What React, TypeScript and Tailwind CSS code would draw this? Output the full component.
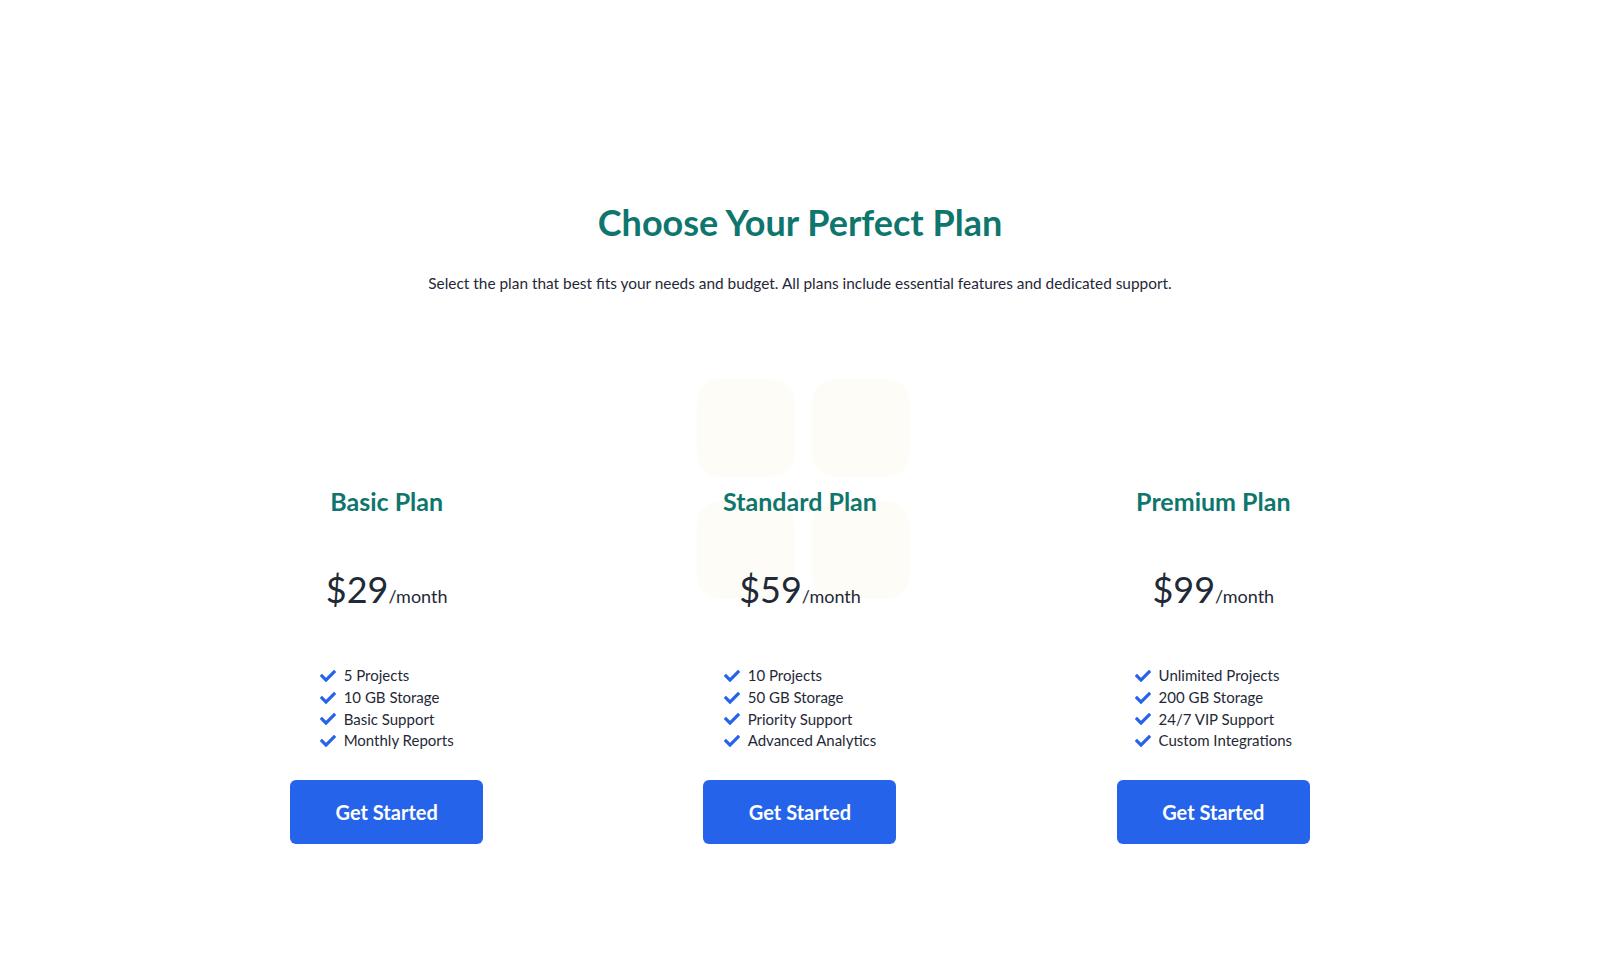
import { FaCheck } from 'react-icons/fa'

type Plan = {
  name: string
  price: string
  features: string[]
}

const plans: Plan[] = [
  { name: 'Basic Plan', price: '$29', features: ['5 Projects', '10 GB Storage', 'Basic Support', 'Monthly Reports'] },
  { name: 'Standard Plan', price: '$59', features: ['10 Projects', '50 GB Storage', 'Priority Support', 'Advanced Analytics'] },
  { name: 'Premium Plan', price: '$99', features: ['Unlimited Projects', '200 GB Storage', '24/7 VIP Support', 'Custom Integrations'] },
]

function PlanCard({ plan, decorated }: { plan: Plan; decorated?: boolean }) {
  return (
    <div className="relative flex flex-col items-center pt-[190px]">
      {/* Faint decorative tiles behind the middle plan */}
      {decorated && (
        <div className="pointer-events-none absolute left-1/2 top-[84px] grid -translate-x-1/2 grid-cols-2 gap-6">
          <div className="h-[98px] w-[98px] rounded-3xl bg-[#fdfcf6]" />
          <div className="h-[98px] w-[98px] rounded-3xl bg-[#fdfcf6]" />
          <div className="h-[98px] w-[98px] rounded-3xl bg-[#fdfcf6]" />
          <div className="h-[98px] w-[98px] rounded-3xl bg-[#fdfcf6]" />
        </div>
      )}
      <h3 className="relative text-[25px] font-bold leading-8 text-[#0f766e]">{plan.name}</h3>
      <div className="relative mt-[52px] flex items-baseline text-[#1f2937]">
        <span className="text-[36px] leading-10">{plan.price}</span>
        <span className="text-[18px]">/month</span>
      </div>
      <ul className="relative mt-[55px] flex flex-col">
        {plan.features.map((f) => (
          <li key={f} className="flex items-center gap-2 text-[15px] leading-[21.8px] text-[#1f2937]">
            <FaCheck className="h-4 w-4 text-[#2563eb]" />
            <span>{f}</span>
          </li>
        ))}
      </ul>
      <button className="relative mt-[28px] h-16 w-[193px] rounded-md bg-[#2563eb] text-[20px] font-bold text-white">
        Get Started
      </button>
    </div>
  )
}

export default function App() {
  return (
    <div className="min-h-[978px] w-full bg-white" style={{ fontFamily: 'Lato, "Noto Sans", sans-serif' }}>
      <section className="flex flex-col items-center pt-[202px]">
        <h2 className="text-4xl font-bold leading-10 text-[#0f766e]">Choose Your Perfect Plan</h2>
        <p className="mt-[29px] text-[15.4px] leading-6 text-[#1f2937]">
          Select the plan that best fits your needs and budget. All plans include essential features and dedicated
          support.
        </p>
        <div className="grid w-[1240px] grid-cols-3">
          {plans.map((p, i) => (
            <PlanCard key={p.name} plan={p} decorated={i === 1} />
          ))}
        </div>
      </section>
    </div>
  )
}
